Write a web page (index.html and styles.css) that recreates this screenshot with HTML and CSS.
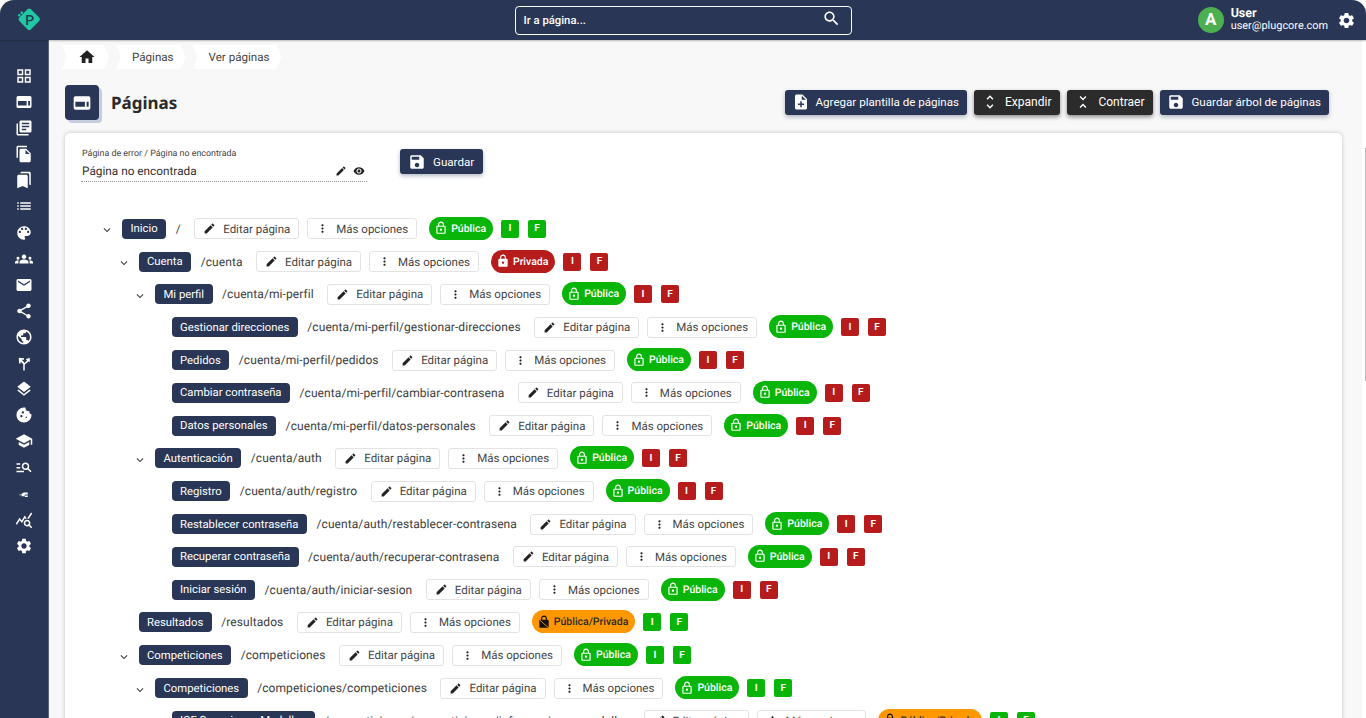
FILE: index.html
```html
<!DOCTYPE html>
<html lang="es">
<head>
<meta charset="utf-8">
<title>Páginas</title>
<link rel="stylesheet" href="styles.css">
</head>
<body>
<svg class="defs" aria-hidden="true">
<symbol id="i-grid" viewBox="0 0 24 24"><path d="M3 3v8h8V3H3zm6 6H5V5h4v4zm-6 4v8h8v-8H3zm6 6H5v-4h4v4zm4-16v8h8V3h-8zm6 6h-4V5h4v4zm-6 4v8h8v-8h-8zm6 6h-4v-4h4v4z"/></symbol>
<symbol id="i-web" viewBox="0 0 24 24"><path fill-rule="evenodd" d="M4 4h16a2 2 0 0 1 2 2v12a2 2 0 0 1-2 2H4a2 2 0 0 1-2-2V6a2 2 0 0 1 2-2zM4 10.500v6h11.500v-6H4zm13.500 0v6H20v-6h-2.500z"/></symbol>
<symbol id="i-books" viewBox="0 0 24 24"><path d="M4 6H2v14c0 1.1.9 2 2 2h14v-2H4V6zm16-4H8c-1.1 0-2 .9-2 2v12c0 1.1.9 2 2 2h12c1.1 0 2-.9 2-2V4c0-1.1-.9-2-2-2zm-1 9H9V9h10v2zm-4 4H9v-2h6v2zm4-8H9V5h10v2z"/></symbol>
<symbol id="i-copy" viewBox="0 0 24 24"><path d="M16 1H4c-1.1 0-2 .9-2 2v14h2V3h12V1zm-1 4l6 6v10c0 1.1-.9 2-2 2H7.99C6.89 23 6 22.1 6 21l.01-14c0-1.1.89-2 1.99-2h7zm-1 7h5.5L14 6.5V12z"/></symbol>
<symbol id="i-marks" viewBox="0 0 24 24"><path d="M19 18l2 1V3c0-1.1-.9-2-2-2H8.99C7.89 1 7 1.9 7 3h10c1.1 0 2 .9 2 2v13zM15 5H5c-1.1 0-2 .9-2 2v16l7-3 7 3V7c0-1.1-.9-2-2-2z"/></symbol>
<symbol id="i-list" viewBox="0 0 24 24"><path d="M3 13h2v-2H3v2zm0 4h2v-2H3v2zm0-8h2V7H3v2zm4 4h14v-2H7v2zm0 4h14v-2H7v2zM7 7v2h14V7H7z"/></symbol>
<symbol id="i-palette" viewBox="0 0 24 24"><path d="M12 3c-4.97 0-9 4.03-9 9s4.03 9 9 9c.83 0 1.5-.67 1.5-1.5 0-.39-.15-.74-.39-1.01-.23-.26-.38-.61-.38-.99 0-.83.67-1.5 1.5-1.5H16c2.76 0 5-2.24 5-5 0-4.42-4.03-8-9-8zm-5.5 9c-.83 0-1.5-.67-1.5-1.5S5.67 9 6.5 9 8 9.67 8 10.5 7.33 12 6.5 12zm3-4C8.67 8 8 7.33 8 6.5S8.67 5 9.5 5s1.5.67 1.5 1.5S10.33 8 9.5 8zm5 0c-.83 0-1.5-.67-1.5-1.5S13.67 5 14.5 5s1.5.67 1.5 1.5S15.33 8 14.5 8zm3 4c-.83 0-1.5-.67-1.5-1.5S16.67 9 17.5 9s1.5.67 1.5 1.5-.67 1.5-1.5 1.5z"/></symbol>
<symbol id="i-groups" viewBox="0 0 24 24"><path d="M12 12.75c1.63 0 3.07.39 4.24.9 1.08.48 1.76 1.56 1.76 2.73V18H6v-1.61c0-1.18.68-2.26 1.76-2.73 1.17-.52 2.61-.91 4.24-.91zM4 13c1.1 0 2-.9 2-2s-.9-2-2-2-2 .9-2 2 .9 2 2 2zm1.13 1.1c-.37-.06-.74-.1-1.13-.1-.99 0-1.93.21-2.78.58C.48 14.9 0 15.62 0 16.43V18h4.5v-1.61c0-.83.23-1.61.63-2.29zM20 13c1.1 0 2-.9 2-2s-.9-2-2-2-2 .9-2 2 .9 2 2 2zm4 3.43c0-.81-.48-1.53-1.22-1.85-.85-.37-1.79-.58-2.78-.58-.39 0-.76.04-1.13.1.4.68.63 1.46.63 2.29V18H24v-1.57zM12 6c1.66 0 3 1.34 3 3s-1.34 3-3 3-3-1.34-3-3 1.34-3 3-3z"/></symbol>
<symbol id="i-mail" viewBox="0 0 24 24"><path d="M20 4H4c-1.1 0-1.99.9-1.99 2L2 18c0 1.1.9 2 2 2h16c1.1 0 2-.9 2-2V6c0-1.1-.9-2-2-2zm0 4l-8 5-8-5V6l8 5 8-5v2z"/></symbol>
<symbol id="i-share" viewBox="0 0 24 24"><path d="M18 16.08c-.76 0-1.44.3-1.96.77L8.91 12.7c.05-.23.09-.46.09-.7s-.04-.47-.09-.7l7.05-4.11c.54.5 1.25.81 2.04.81 1.66 0 3-1.34 3-3s-1.34-3-3-3-3 1.34-3 3c0 .24.04.47.09.7L8.04 9.81C7.5 9.31 6.79 9 6 9c-1.66 0-3 1.34-3 3s1.34 3 3 3c.79 0 1.5-.31 2.04-.81l7.12 4.16c-.05.21-.08.43-.08.65 0 1.61 1.31 2.92 2.92 2.92 1.61 0 2.92-1.31 2.92-2.92s-1.31-2.92-2.92-2.92z"/></symbol>
<symbol id="i-public" viewBox="0 0 24 24"><path d="M12 2C6.48 2 2 6.48 2 12s4.48 10 10 10 10-4.48 10-10S17.52 2 12 2zm-1 17.93c-3.95-.49-7-3.85-7-7.93 0-.62.08-1.21.21-1.79L9 15v1c0 1.1.9 2 2 2v1.93zm6.9-2.54c-.26-.81-1-1.39-1.9-1.39h-1v-3c0-.55-.45-1-1-1H8v-2h2c.55 0 1-.45 1-1V7h2c1.1 0 2-.9 2-2v-.41c2.93 1.19 5 4.06 5 7.41 0 2.08-.8 3.97-2.1 5.39z"/></symbol>
<symbol id="i-split" viewBox="0 0 24 24"><path d="M11 22v-8.500L7.500 10v2.500h-2L5 5l7 .5v2H9L13 12l3-3.500-1.500-1.500 5-2 .5 5.500L18.500 9.500 13 14v8z"/></symbol>
<symbol id="i-layers" viewBox="0 0 24 24"><path d="M11.99 18.54l-7.37-5.73L3 14.07l9 7 9-7-1.63-1.27-7.38 5.74zM12 16l7.36-5.73L21 9l-9-7-9 7 1.63 1.27L12 16z"/></symbol>
<symbol id="i-cookie" viewBox="0 0 24 24"><path d="M21.95 10.99c-1.79-.03-3.7-1.95-2.68-4.22-2.98 1-5.77-1.59-5.19-4.56C6.95.71 2 6.58 2 12c0 5.52 4.48 10 10 10 5.89 0 10.54-5.08 9.95-11.01zM8.5 15c-.83 0-1.5-.67-1.5-1.5S7.67 12 8.5 12s1.5.67 1.5 1.5S9.33 15 8.5 15zm2-5C9.67 10 9 9.33 9 8.5S9.67 7 10.5 7s1.5.67 1.5 1.5-.67 1.5-1.5 1.5zm4.5 6c-.55 0-1-.45-1-1s.45-1 1-1 1 .45 1 1-.45 1-1 1z"/></symbol>
<symbol id="i-school" viewBox="0 0 24 24"><path d="M5 13.18v4L12 21l7-3.82v-4L12 17l-7-3.82zM12 3L1 9l11 6 9-4.91V17h2V9L12 3z"/></symbol>
<symbol id="i-manage" viewBox="0 0 24 24"><path d="M7 9H2V7h5v2zm0 3H2v2h5v-2zm13.59 7l-3.83-3.83c-.8.52-1.74.83-2.76.83-2.76 0-5-2.24-5-5s2.24-5 5-5 5 2.24 5 5c0 1.02-.31 1.96-.83 2.75L22 17.59 20.59 19zM17 11c0-1.65-1.35-3-3-3s-3 1.35-3 3 1.35 3 3 3 3-1.35 3-3zM2 19h10v-2H2v2z"/></symbol>
<symbol id="i-tiny" viewBox="0 0 24 24"><path d="M6 12.500h3V11h2v-1h6v2.500h-4v1l-1 1.500H9v-1.500H6zM13 14h4v2h-4z"/></symbol>
<symbol id="i-stats" viewBox="0 0 24 24"><path d="M19.88 18.47c.44-.7.7-1.51.7-2.39 0-2.49-2.01-4.5-4.5-4.5s-4.5 2.01-4.5 4.5 2.01 4.5 4.49 4.5c.88 0 1.7-.26 2.39-.7L21.58 23 23 21.58l-3.12-3.11zm-3.8.11c-1.38 0-2.5-1.12-2.5-2.5s1.12-2.5 2.5-2.5 2.5 1.12 2.5 2.5-1.12 2.5-2.5 2.5zm-.36-8.5c-.74.02-1.45.18-2.1.45l-.55-.83-3.8 6.18-3.01-3.52-3.63 5.81L1 17l5-8 3 3.5L13 6l2.72 4.08zm2.59.5c-.64-.28-1.33-.45-2.05-.49L21.38 2 23 3.18l-4.69 7.4z"/></symbol>
<symbol id="i-gear" viewBox="0 0 24 24"><path d="M19.14 12.94c.04-.3.06-.61.06-.94 0-.32-.02-.64-.07-.94l2.03-1.58c.18-.14.23-.41.12-.61l-1.92-3.32c-.12-.22-.37-.29-.59-.22l-2.39.96c-.5-.38-1.03-.7-1.62-.94l-.36-2.54c-.04-.24-.24-.41-.48-.41h-3.84c-.24 0-.43.17-.47.41l-.36 2.54c-.59.24-1.13.57-1.62.94l-2.39-.96c-.22-.08-.47 0-.59.22L2.74 8.87c-.12.21-.08.47.12.61l2.03 1.58c-.05.3-.09.63-.09.94s.02.64.07.94l-2.03 1.58c-.18.14-.23.41-.12.61l1.92 3.32c.12.22.37.29.59.22l2.39-.96c.5.38 1.03.7 1.62.94l.36 2.54c.05.24.24.41.48.41h3.84c.24 0 .44-.17.47-.41l.36-2.54c.59-.24 1.13-.56 1.62-.94l2.39.96c.22.08.47 0 .59-.22l1.92-3.32c.12-.22.07-.47-.12-.61l-2.01-1.58zM12 15.6c-1.98 0-3.6-1.62-3.6-3.6s1.62-3.6 3.6-3.6 3.6 1.62 3.6 3.6-1.62 3.6-3.6 3.6z"/></symbol>
<symbol id="i-home" viewBox="0 0 24 24"><path d="M10 20v-6h4v6h5v-8h3L12 3 2 12h3v8z"/></symbol>
<symbol id="i-search" viewBox="0 0 24 24"><path d="M15.5 14h-.79l-.28-.27C15.41 12.59 16 11.11 16 9.5 16 5.91 13.09 3 9.5 3S3 5.91 3 9.5 5.91 16 9.5 16c1.61 0 3.09-.59 4.23-1.57l.27.28v.79l5 4.99L20.49 19l-4.99-5zm-6 0C7.01 14 5 11.99 5 9.5S7.01 5 9.5 5 14 7.01 14 9.5 11.99 14 9.5 14z"/></symbol>
<symbol id="i-note" viewBox="0 0 24 24"><path d="M14 2H6c-1.1 0-1.99.9-1.99 2L4 20c0 1.1.89 2 1.99 2H18c1.1 0 2-.9 2-2V8l-6-6zm2 14h-3v3h-2v-3H8v-2h3v-3h2v3h3v2zm-3-7V3.5L18.5 9H13z"/></symbol>
<symbol id="i-unfold" viewBox="0 0 24 24"><path d="M12 5.830L15.170 9l1.410-1.410L12 3 7.410 7.590 8.830 9 12 5.830zm0 12.340L8.830 15l-1.410 1.410L12 21l4.590-4.590L15.170 15 12 18.170z"/></symbol>
<symbol id="i-fold" viewBox="0 0 24 24"><path d="M7.410 18.590L8.830 20 12 16.830 15.170 20l1.410-1.410L12 14l-4.590 4.590zm9.180-13.180L15.170 4 12 7.170 8.830 4 7.410 5.410 12 10l4.590-4.590z"/></symbol>
<symbol id="i-save" viewBox="0 0 24 24"><path d="M17 3H5c-1.110 0-2 .9-2 2v14c0 1.100.89 2 2 2h14c1.100 0 2-.9 2-2V7l-4-4zm-5 16c-1.660 0-3-1.340-3-3s1.340-3 3-3 3 1.340 3 3-1.340 3-3 3zm3-10H5V5h10v4z"/></symbol>
<symbol id="i-edit" viewBox="0 0 24 24"><path d="M3 17.250V21h3.750L17.810 9.940l-3.750-3.750L3 17.250zM20.710 7.040c.39-.39.39-1.020 0-1.410l-2.340-2.340c-.39-.39-1.020-.39-1.410 0l-1.830 1.830 3.750 3.750 1.830-1.830z"/></symbol>
<symbol id="i-eye" viewBox="0 0 24 24"><path d="M12 4.500C7 4.500 2.730 7.610 1 12c1.730 4.390 6 7.500 11 7.500s9.270-3.110 11-7.500c-1.730-4.390-6-7.500-11-7.500zM12 17c-2.760 0-5-2.240-5-5s2.240-5 5-5 5 2.240 5 5-2.240 5-5 5zm0-8c-1.660 0-3 1.340-3 3s1.340 3 3 3 3-1.340 3-3-1.340-3-3-3z"/></symbol>
<symbol id="i-more" viewBox="0 0 24 24"><path d="M12 8c1.100 0 2-.9 2-2s-.9-2-2-2-2 .9-2 2 .9 2 2 2zm0 2c-1.100 0-2 .9-2 2s.9 2 2 2 2-.9 2-2-.9-2-2-2zm0 6c-1.100 0-2 .9-2 2s.9 2 2 2 2-.9 2-2-.9-2-2-2z"/></symbol>
<symbol id="i-lockline" viewBox="0 0 24 24"><path d="M12 17c1.100 0 2-.9 2-2s-.9-2-2-2-2 .9-2 2 .9 2 2 2zm6-9h-1V6c0-2.760-2.240-5-5-5S7 3.240 7 6v2H6c-1.100 0-2 .9-2 2v10c0 1.100.9 2 2 2h12c1.100 0 2-.9 2-2V10c0-1.100-.9-2-2-2zM8.900 6c0-1.710 1.390-3.100 3.100-3.100s3.100 1.390 3.100 3.100v2H8.900V6zM18 20H6V10h12v10z"/></symbol>
<symbol id="i-lock" viewBox="0 0 24 24"><path d="M18 8h-1V6c0-2.760-2.240-5-5-5S7 3.240 7 6v2H6c-1.100 0-2 .9-2 2v10c0 1.100.9 2 2 2h12c1.100 0 2-.9 2-2V10c0-1.100-.9-2-2-2zm-6 9c-1.100 0-2-.9-2-2s.9-2 2-2 2 .9 2 2-.9 2-2 2zm3.100-9H8.900V6c0-1.710 1.390-3.100 3.100-3.100 1.710 0 3.100 1.390 3.100 3.100v2z"/></symbol>
<symbol id="i-mixed" viewBox="0 0 24 24"><path d="M18 8h-1V6c0-2.760-2.240-5-5-5S7 3.240 7 6v2H6c-1.100 0-2 .9-2 2v10c0 1.100.9 2 2 2h12c1.100 0 2-.9 2-2V10c0-1.100-.9-2-2-2zM15.100 8H8.900V6c0-1.710 1.390-3.100 3.100-3.100 1.710 0 3.100 1.390 3.100 3.100v2z"/><path class="slash" d="M5 9l15 13"/></symbol>
<symbol id="i-chev" viewBox="0 0 24 24"><path d="M16.590 8.590L12 13.170 7.410 8.590 6 10l6 6 6-6z"/></symbol>
</svg>

<div class="app">
  <header class="topbar">
    <div class="brand">
      <svg class="logo" viewBox="0 0 28 28">
        <rect class="logo-d" x="5" y="5" width="16.500" height="16.500" rx="2.500" transform="rotate(45 13.250 13.250)"/>
        <rect class="logo-d" x="2" y="8" width="2.500" height="2.500" rx="1"/>
        <rect class="logo-d" x="4.500" y="5.500" width="2.500" height="2.500" rx="1"/>
        <text class="logo-p" x="13.800" y="19">P</text>
      </svg>
    </div>
    <div class="search">
      <span class="search-text">Ir a página...</span>
      <svg class="search-ic"><use href="#i-search"/></svg>
    </div>
    <div class="user">
      <span class="avatar">A</span>
      <div class="user-txt"><b>User</b><span>user@plugcore.com</span></div>
      <svg class="user-gear"><use href="#i-gear"/></svg>
    </div>
  </header>
  <div class="body">
    <nav class="side">
      <svg><use href="#i-grid"/></svg>
      <svg><use href="#i-web"/></svg>
      <svg><use href="#i-books"/></svg>
      <svg><use href="#i-copy"/></svg>
      <svg><use href="#i-marks"/></svg>
      <svg><use href="#i-list"/></svg>
      <svg><use href="#i-palette"/></svg>
      <svg><use href="#i-groups"/></svg>
      <svg><use href="#i-mail"/></svg>
      <svg><use href="#i-share"/></svg>
      <svg><use href="#i-public"/></svg>
      <svg><use href="#i-split"/></svg>
      <svg><use href="#i-layers"/></svg>
      <svg><use href="#i-cookie"/></svg>
      <svg><use href="#i-school"/></svg>
      <svg><use href="#i-manage"/></svg>
      <svg><use href="#i-tiny"/></svg>
      <svg><use href="#i-stats"/></svg>
      <svg><use href="#i-gear"/></svg>
    </nav>
    <main class="main">
      <div class="crumbs">
        <span class="crumb crumb-home"><svg><use href="#i-home"/></svg></span>
        <span class="crumb">Páginas</span>
        <span class="crumb">Ver páginas</span>
      </div>
      <div class="head">
        <span class="head-ic"><svg><use href="#i-web"/></svg></span>
        <h1>Páginas</h1>
        <div class="actions">
          <button class="btn"><svg><use href="#i-note"/></svg>Agregar plantilla de páginas</button>
          <button class="btn dark"><svg><use href="#i-unfold"/></svg>Expandir</button>
          <button class="btn dark"><svg><use href="#i-fold"/></svg>Contraer</button>
          <button class="btn"><svg><use href="#i-save"/></svg>Guardar árbol de páginas</button>
        </div>
      </div>
      <section class="card">
        <div class="errorform">
          <div class="field">
            <label>Página de error / Página no encontrada</label>
            <div class="field-val"><span>Página no encontrada</span><svg><use href="#i-edit"/></svg><svg><use href="#i-eye"/></svg></div>
          </div>
          <button class="btn btn-save"><svg><use href="#i-save"/></svg>Guardar</button>
        </div>

        <ul class="tree root">
          <li>
            <div class="row"><span class="toggle"><svg><use href="#i-chev"/></svg></span><span class="tag">Inicio</span><span class="path">/</span><a class="opt"><svg><use href="#i-edit"/></svg>Editar página</a><a class="opt"><svg><use href="#i-more"/></svg>Más opciones</a><span class="pill pub"><svg><use href="#i-lockline"/></svg>Pública</span><span class="sq on">I</span><span class="sq on">F</span></div>
            <ul class="tree">
              <li>
                <div class="row"><span class="toggle"><svg><use href="#i-chev"/></svg></span><span class="tag">Cuenta</span><span class="path">/cuenta</span><a class="opt"><svg><use href="#i-edit"/></svg>Editar página</a><a class="opt"><svg><use href="#i-more"/></svg>Más opciones</a><span class="pill priv"><svg><use href="#i-lock"/></svg>Privada</span><span class="sq off">I</span><span class="sq off">F</span></div>
                <ul class="tree">
                  <li>
                    <div class="row"><span class="toggle"><svg><use href="#i-chev"/></svg></span><span class="tag">Mi perfil</span><span class="path">/cuenta/mi-perfil</span><a class="opt"><svg><use href="#i-edit"/></svg>Editar página</a><a class="opt"><svg><use href="#i-more"/></svg>Más opciones</a><span class="pill pub"><svg><use href="#i-lockline"/></svg>Pública</span><span class="sq off">I</span><span class="sq off">F</span></div>
                    <ul class="tree">
                      <li><div class="row"><span class="toggle"></span><span class="tag">Gestionar direcciones</span><span class="path">/cuenta/mi-perfil/gestionar-direcciones</span><a class="opt"><svg><use href="#i-edit"/></svg>Editar página</a><a class="opt"><svg><use href="#i-more"/></svg>Más opciones</a><span class="pill pub"><svg><use href="#i-lockline"/></svg>Pública</span><span class="sq off">I</span><span class="sq off">F</span></div></li>
                      <li><div class="row"><span class="toggle"></span><span class="tag">Pedidos</span><span class="path">/cuenta/mi-perfil/pedidos</span><a class="opt"><svg><use href="#i-edit"/></svg>Editar página</a><a class="opt"><svg><use href="#i-more"/></svg>Más opciones</a><span class="pill pub"><svg><use href="#i-lockline"/></svg>Pública</span><span class="sq off">I</span><span class="sq off">F</span></div></li>
                      <li><div class="row"><span class="toggle"></span><span class="tag">Cambiar contraseña</span><span class="path">/cuenta/mi-perfil/cambiar-contrasena</span><a class="opt"><svg><use href="#i-edit"/></svg>Editar página</a><a class="opt"><svg><use href="#i-more"/></svg>Más opciones</a><span class="pill pub"><svg><use href="#i-lockline"/></svg>Pública</span><span class="sq off">I</span><span class="sq off">F</span></div></li>
                      <li><div class="row"><span class="toggle"></span><span class="tag">Datos personales</span><span class="path">/cuenta/mi-perfil/datos-personales</span><a class="opt"><svg><use href="#i-edit"/></svg>Editar página</a><a class="opt"><svg><use href="#i-more"/></svg>Más opciones</a><span class="pill pub"><svg><use href="#i-lockline"/></svg>Pública</span><span class="sq off">I</span><span class="sq off">F</span></div></li>
                    </ul>
                  </li>
                  <li>
                    <div class="row"><span class="toggle"><svg><use href="#i-chev"/></svg></span><span class="tag">Autenticación</span><span class="path">/cuenta/auth</span><a class="opt"><svg><use href="#i-edit"/></svg>Editar página</a><a class="opt"><svg><use href="#i-more"/></svg>Más opciones</a><span class="pill pub"><svg><use href="#i-lockline"/></svg>Pública</span><span class="sq off">I</span><span class="sq off">F</span></div>
                    <ul class="tree">
                      <li><div class="row"><span class="toggle"></span><span class="tag">Registro</span><span class="path">/cuenta/auth/registro</span><a class="opt"><svg><use href="#i-edit"/></svg>Editar página</a><a class="opt"><svg><use href="#i-more"/></svg>Más opciones</a><span class="pill pub"><svg><use href="#i-lockline"/></svg>Pública</span><span class="sq off">I</span><span class="sq off">F</span></div></li>
                      <li><div class="row"><span class="toggle"></span><span class="tag">Restablecer contraseña</span><span class="path">/cuenta/auth/restablecer-contrasena</span><a class="opt"><svg><use href="#i-edit"/></svg>Editar página</a><a class="opt"><svg><use href="#i-more"/></svg>Más opciones</a><span class="pill pub"><svg><use href="#i-lockline"/></svg>Pública</span><span class="sq off">I</span><span class="sq off">F</span></div></li>
                      <li><div class="row"><span class="toggle"></span><span class="tag">Recuperar contraseña</span><span class="path">/cuenta/auth/recuperar-contrasena</span><a class="opt"><svg><use href="#i-edit"/></svg>Editar página</a><a class="opt"><svg><use href="#i-more"/></svg>Más opciones</a><span class="pill pub"><svg><use href="#i-lockline"/></svg>Pública</span><span class="sq off">I</span><span class="sq off">F</span></div></li>
                      <li><div class="row"><span class="toggle"></span><span class="tag">Iniciar sesión</span><span class="path">/cuenta/auth/iniciar-sesion</span><a class="opt"><svg><use href="#i-edit"/></svg>Editar página</a><a class="opt"><svg><use href="#i-more"/></svg>Más opciones</a><span class="pill pub"><svg><use href="#i-lockline"/></svg>Pública</span><span class="sq off">I</span><span class="sq off">F</span></div></li>
                    </ul>
                  </li>
                </ul>
              </li>
              <li><div class="row"><span class="toggle"></span><span class="tag">Resultados</span><span class="path">/resultados</span><a class="opt"><svg><use href="#i-edit"/></svg>Editar página</a><a class="opt"><svg><use href="#i-more"/></svg>Más opciones</a><span class="pill mix"><svg><use href="#i-mixed"/></svg>Pública/Privada</span><span class="sq on">I</span><span class="sq on">F</span></div></li>
              <li>
                <div class="row"><span class="toggle"><svg><use href="#i-chev"/></svg></span><span class="tag">Competiciones</span><span class="path">/competiciones</span><a class="opt"><svg><use href="#i-edit"/></svg>Editar página</a><a class="opt"><svg><use href="#i-more"/></svg>Más opciones</a><span class="pill pub"><svg><use href="#i-lockline"/></svg>Pública</span><span class="sq on">I</span><span class="sq on">F</span></div>
                <ul class="tree">
                  <li>
                    <div class="row"><span class="toggle"><svg><use href="#i-chev"/></svg></span><span class="tag">Competiciones</span><span class="path">/competiciones/competiciones</span><a class="opt"><svg><use href="#i-edit"/></svg>Editar página</a><a class="opt"><svg><use href="#i-more"/></svg>Más opciones</a><span class="pill pub"><svg><use href="#i-lockline"/></svg>Pública</span><span class="sq on">I</span><span class="sq on">F</span></div>
                    <ul class="tree">
                      <li><div class="row"><span class="toggle"></span><span class="tag">ICF Sucesiones Medallas</span><span class="path">/competiciones/competiciones/icf-sucesiones-medallas</span><a class="opt"><svg><use href="#i-edit"/></svg>Editar página</a><a class="opt"><svg><use href="#i-more"/></svg>Más opciones</a><span class="pill mix"><svg><use href="#i-mixed"/></svg>Pública/Privada</span><span class="sq on">I</span><span class="sq on">F</span></div></li>
                    </ul>
                  </li>
                </ul>
              </li>
            </ul>
          </li>
        </ul>
      </section>
    </main>
    <div class="gutter"><span class="thumb"></span></div>
  </div>
</div>
</body>
</html>
```
FILE: styles.css
```css
* { box-sizing: border-box; }
html, body { margin: 0; height: 100%; overflow: hidden; background: #fff; }
body { font-family: Roboto, "Liberation Sans", sans-serif; font-size: 12px; color: #333; text-rendering: geometricPrecision; }
.defs { display: none; }
svg { fill: currentColor; flex: none; }

.app { height: 718px; display: flex; flex-direction: column; overflow: hidden; }
.topbar {
  flex: none; height: 40px; background: #2a3655; color: #fff;
  display: grid; grid-template-columns: 1fr 337px 1fr; align-items: center;
  border-radius: 14px 14px 0 0; box-shadow: 0 1px 2px rgba(0,0,0,.25); position: relative; z-index: 2;
}
.brand { padding-left: 16px; display: flex; }
.logo { width: 28px; height: 28px; }
.logo-d { fill: #1ec9a4; }
.logo-p { font: 500 14px Roboto, sans-serif; fill: #2a3655; text-anchor: middle; }
.search {
  height: 29px; border: 1px solid #fff; border-radius: 4px;
  display: flex; align-items: center; justify-content: space-between; padding: 0 10px 0 8px;
}
.search-text { font-size: 11.300px; font-weight: 500; }
.search-ic { width: 19px; height: 19px; margin-top: -4px; }
.user { display: flex; align-items: center; justify-content: flex-end; padding-right: 10px; }
.avatar {
  width: 26px; height: 26px; border-radius: 50%; background: #4caf50; color: #fff;
  display: flex; align-items: center; justify-content: center; font-size: 17px; font-weight: 700;
}
.user-txt { display: flex; flex-direction: column; margin-left: 7px; line-height: 12px; font-size: 10.900px; }
.user-txt b { font-size: 12.500px; font-weight: 700; }
.user-gear { width: 19px; height: 19px; margin-left: 9px; }

.body { flex: 1; min-height: 0; display: flex; }
.side {
  flex: none; width: 49px; background: #2a3655; color: #fff; padding-top: 27px;
  display: flex; flex-direction: column; align-items: center; gap: 8.100px;
  border-right: 1px solid #5a6479;
}
.side svg { width: 18px; height: 18px; }

.main { flex: none; width: 1313px; background: #f8f8f8; padding: 5px 20px 0 16px; overflow: hidden; }
.gutter { flex: 1; background: #fff; display: flex; justify-content: flex-end; align-items: flex-start; }
.thumb { display: block; width: 1px; height: 233px; margin-top: 108px; background: #bdbdbd; }

.crumbs { display: flex; gap: 7px; height: 24px; margin-left: -3px; }
.crumb {
  height: 24px; padding: 0 12px 0 16px; background: #fff; color: #444;
  display: flex; align-items: center; font-size: 11.600px;
  clip-path: polygon(0 0, calc(100% - 5px) 0, 100% 50%, calc(100% - 5px) 100%, 0 100%, 5px 50%);
}
.crumb-home { width: 47px; color: #222; justify-content: center; padding: 0 0 0 3px; }
.crumb-home svg { width: 18px; height: 18px; }

.head { display: flex; align-items: center; height: 35px; margin-top: 16px; }
.head-ic {
  width: 34px; height: 35px; border-radius: 4px; background: #2a3655; color: #fff;
  display: flex; align-items: center; justify-content: center; box-shadow: 3px 3px 0 #c5cde0;
}
.head-ic svg { width: 20px; height: 20px; }
h1 { margin: 0 0 0 12px; font: 700 17px "Noto Sans", sans-serif; color: #2b2b2b; }
.actions { margin-left: auto; margin-right: 13px; display: flex; gap: 7px; margin-top: -1px; }
.btn {
  height: 25px; border: 0; border-radius: 3px; background: #2a3655; color: #fff;
  font: 400 11.600px Roboto, sans-serif; display: flex; align-items: center; gap: 6px; padding: 0 8px 0 7px;
  box-shadow: 0 2px 4px rgba(42,54,85,.35);
}
.btn svg { width: 18px; height: 18px; }
.btn.dark { background: #2b2b2b; box-shadow: 0 2px 4px rgba(0,0,0,.45); font-size: 12px; padding-right: 9px; }

.card {
  margin-top: 13px; background: #fff; border-radius: 5px; padding: 16px 16px 40px;
  box-shadow: 0 0 4px rgba(0,0,0,.22); height: 700px;
}
.errorform { display: flex; align-items: flex-start; gap: 33px; }
.field { width: 286px; border-bottom: 1px dotted #999; height: 33px; }
.field label { display: block; font-size: 8.900px; line-height: 11px; color: #444; padding-left: 1px; }
.field-val { display: flex; align-items: center; font-size: 11.800px; line-height: 18px; margin-top: 2px; color: #333; padding: 0 2px 0 1px; }
.field-val span { flex: 1; }
.field-val svg { width: 12px; height: 12px; color: #222; margin-left: 6px; }
.btn-save { gap: 7px; padding: 0 9px 0 8px; }

.tree { list-style: none; margin: 0; padding: 0 0 0 16.500px; }
.tree.root { padding: 0 0 0 19px; margin-top: 30.500px; }
.row { height: 32.800px; display: flex; align-items: center; }
.toggle { width: 16px; height: 16px; margin-right: 6px; margin-top: 5px; color: #444; flex: none; display: flex; }
.toggle svg { width: 14px; height: 14px; }
.tag {
  height: 20px; padding: 0 8.500px; border-radius: 4px; background: #2a3655; color: #fff;
  display: flex; align-items: center; font-size: 11.300px; white-space: nowrap;
}
.path { margin: 0 13.500px 0 9.500px; white-space: nowrap; font-size: 12px; letter-spacing: .08px; color: #3d3d3d; }
.opt {
  height: 21px; border: 1px solid #e3e3e3; border-radius: 3px; background: #fff; color: #444;
  display: flex; align-items: center; gap: 7px; padding: 0 8px; margin-right: 8px; white-space: nowrap; font-size: 11.500px;
}
.opt svg { width: 13px; height: 13px; color: #222; }
.pill {
  height: 23px; border-radius: 12px; margin: -1px 8px 0 4px; padding: 0 7px 0 5px;
  display: flex; align-items: center; gap: 3px; font-size: 10.500px; font-weight: 500; white-space: nowrap; color: #fff;
}
.pill svg { width: 14px; height: 14px; }
.pub { background: #09b509; }
.priv { background: #b71c1c; }
.mix { background: #ff9800; color: #2b2b2b; }
.mix svg { color: #111; }
.slash { stroke: #ff9800; stroke-width: 1.500; fill: none; }
.sq {
  width: 18px; height: 18px; border-radius: 2px; color: #fff; margin-right: 9px;
  display: flex; align-items: center; justify-content: center; font-size: 10px; font-weight: 700;
}
.on { background: #09b509; }
.off { background: #b71c1c; }
```
